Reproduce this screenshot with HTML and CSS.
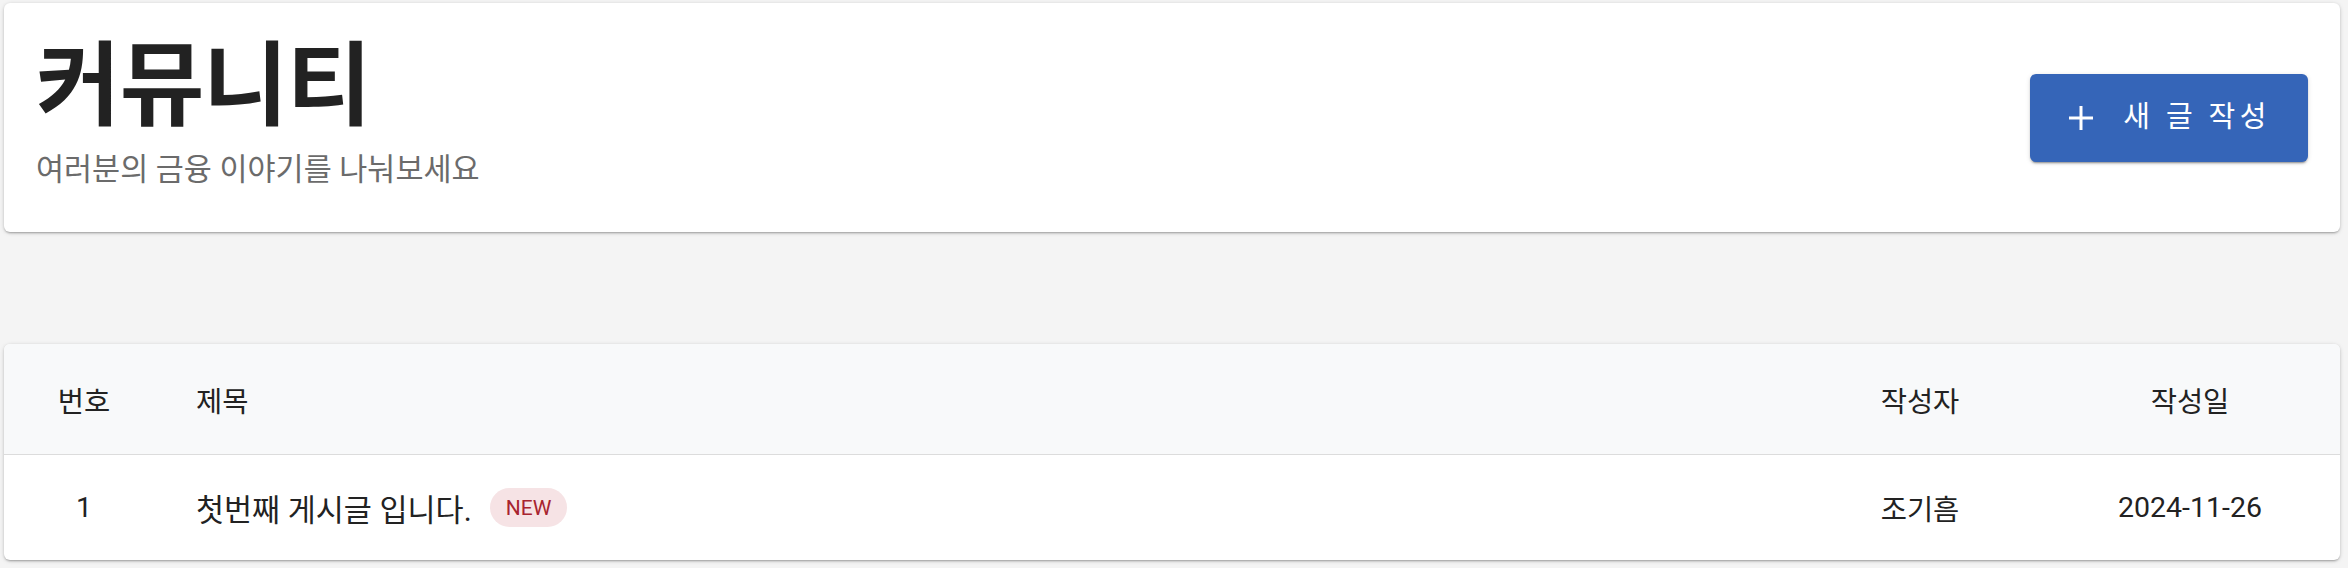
FILE: index.html
```html
<!DOCTYPE html>
<html lang="ko">
<head>
<meta charset="utf-8">
<title>커뮤니티</title>
<link rel="stylesheet" href="styles.css">
</head>
<body>
<div class="page">
  <header class="card hero">
    <div class="hero-text">
      <h1 class="title">커뮤니티</h1>
      <p class="subtitle">여러분의 금융 이야기를 나눠보세요</p>
    </div>
    <button class="btn-primary" type="button">
      <svg class="btn-icon" viewBox="0 0 24 24" aria-hidden="true"><path d="M12 0v24M0 12h24" stroke="currentColor" stroke-width="3" fill="none"/></svg>
      <span class="btn-label">새 글 작성</span>
    </button>
  </header>

  <section class="card board">
    <div class="row head">
      <div class="cell c-num">번호</div>
      <div class="cell c-title">제목</div>
      <div class="cell c-author">작성자</div>
      <div class="cell c-date">작성일</div>
    </div>
    <div class="row body">
      <div class="cell c-num">1</div>
      <div class="cell c-title"><span class="post-title">첫번째 게시글 입니다.</span><span class="badge">NEW</span></div>
      <div class="cell c-author">조기흠</div>
      <div class="cell c-date">2024-11-26</div>
    </div>
  </section>
</div>
</body>
</html>
```

FILE: styles.css
```css
* { box-sizing: border-box; }
html, body { margin: 0; padding: 0; }
body {
  background: #f4f4f4;
  font-family: Roboto, "Noto Sans CJK KR", sans-serif;
  color: #222;
  width: 2348px;
  height: 568px;
  overflow: hidden;
}
.page {
  padding: 3px 8px 0 4px;
  display: flex;
  flex-direction: column;
  gap: 112px;
}
.card {
  background: #fff;
  border-radius: 6px;
  box-shadow: 0 2px 2px -1px rgba(0,0,0,0.2), 0 1px 3px 0 rgba(0,0,0,0.14), 0 1px 5px 0 rgba(0,0,0,0.10);
}
.hero {
  height: 229px;
  padding: 0 32px;
  display: flex;
  align-items: center;
  justify-content: space-between;
}
.hero-text { display: flex; flex-direction: column; padding-bottom: 12px; }
.title {
  margin: 0;
  font-size: 92px;
  font-weight: 700;
  line-height: 1.15;
  color: #222;
  letter-spacing: -1px;
}
.subtitle {
  margin: 10px 0 0;
  font-size: 30.5px;
  line-height: 1.3;
  color: #6b6b6b;
}
.btn-primary {
  width: 278px;
  height: 88px;
  border: 0;
  border-radius: 6px;
  background: #3565b8;
  color: #fff;
  display: flex;
  align-items: center;
  justify-content: center;
  gap: 30px;
  font-family: inherit;
  font-size: 29px;
  font-weight: 400;
  letter-spacing: 4.4px;
  box-shadow: 0 3px 1px -2px rgba(0,0,0,0.2), 0 2px 2px 0 rgba(0,0,0,0.14), 0 1px 5px 0 rgba(0,0,0,0.12);
  padding: 0 0 0 2px;
}
.btn-icon { width: 24px; height: 24px; flex: none; }
.btn-label { line-height: 1; }
.board { overflow: hidden; height: 216px; }
.row {
  display: grid;
  grid-template-columns: 160px 1fr 240px 300px;
  align-items: center;
}
.head {
  height: 111px;
  background: #f8f9fa;
  border-bottom: 1px solid #dcdcdc;
}
.body { height: 105px; }
.cell {
  font-size: 28.5px;
  color: #222;
  text-align: center;
}
.c-title {
  text-align: left;
  padding-left: 32px;
  display: flex;
  align-items: center;
}
.post-title { font-size: 30.5px; }
.badge {
  margin-left: 18px;
  height: 39px;
  padding: 0 16px;
  border-radius: 20px;
  background: #f6e3e5;
  color: #a8242f;
  font-size: 21px;
  display: inline-flex;
  align-items: center;
}
```
